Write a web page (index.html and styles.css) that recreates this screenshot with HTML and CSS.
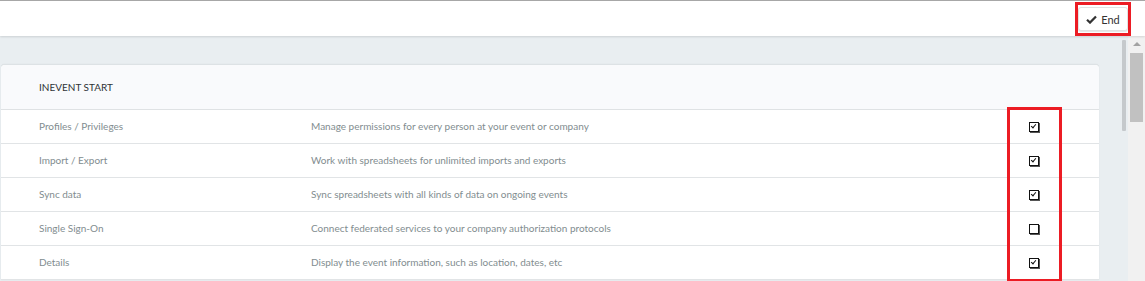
FILE: index.html
```html
<!doctype html>
<html>
    <head>
        <title>Tools</title>
        <meta charset="utf-8">
        <link rel="stylesheet" href="styles.css">
    </head>

    <body>
        <header class="topbar">
            <div class="mark end-mark">
                <button class="end-btn">
                    <svg class="end-icon" width="11" height="9" viewBox="0 0 11 9">
                        <path d="M1 4.8 L4 7.6 L10 1.4" fill="none" stroke="#333" stroke-width="2.2"/>
                    </svg>
                    End
                </button>
            </div>
        </header>

        <section class="main">
            <div class="content">
                <div class="card">
                    <div class="card-head">INEVENT START</div>

                    <div class="row">
                        <div class="cell name">Profiles / Privileges</div>
                        <div class="cell desc">Manage permissions for every person at your event or company</div>
                        <div class="cell check"><span class="box on"></span></div>
                    </div>

                    <div class="row">
                        <div class="cell name">Import / Export</div>
                        <div class="cell desc">Work with spreadsheets for unlimited imports and exports</div>
                        <div class="cell check"><span class="box on"></span></div>
                    </div>

                    <div class="row">
                        <div class="cell name">Sync data</div>
                        <div class="cell desc">Sync spreadsheets with all kinds of data on ongoing events</div>
                        <div class="cell check"><span class="box on"></span></div>
                    </div>

                    <div class="row">
                        <div class="cell name">Single Sign-On</div>
                        <div class="cell desc">Connect federated services to your company authorization protocols</div>
                        <div class="cell check"><span class="box"></span></div>
                    </div>

                    <div class="row">
                        <div class="cell name">Details</div>
                        <div class="cell desc">Display the event information, such as location, dates, etc</div>
                        <div class="cell check"><span class="box on"></span></div>
                    </div>

                    <div class="mark col-mark"></div>
                </div>
                <div class="inner-bar"></div>
            </div>

            <div class="scrollbar">
                <div class="arrow"></div>
                <div class="thumb"></div>
            </div>
        </section>
    </body>
</html>
```

FILE: styles.css
```css
body{
    margin: 0px;
    padding: 0px;
    font-family: Lato, "Open Sans", sans-serif;
    background: #e9eef1;
    overflow: hidden;
}

.topbar{
    display: flex;
    justify-content: flex-end;
    align-items: flex-start;
    height: 35px;
    background: #ffffff;
    border-top: 1px solid #a7a7a7;
    box-shadow: 0 1px 2px rgba(0, 0, 0, 0.12);
    position: relative;
    z-index: 2;
}

.mark{
    border: 3px solid #ec1c24;
    box-sizing: border-box;
}

.end-mark{
    margin: 1px 14px 0 0;
    width: 56px;
    height: 34px;
    padding: 2px 0;
    background: #ffffff;
}

.end-btn{
    display: flex;
    align-items: center;
    justify-content: center;
    gap: 4px;
    width: 50px;
    height: 24px;
    padding: 0;
    border: 1px solid #e2e2e2;
    border-radius: 3px;
    background: #ffffff;
    box-shadow: 0 1px 1px rgba(0, 0, 0, 0.1);
    font-family: Lato, sans-serif;
    font-size: 11px;
    color: #333333;
}

.main{
    display: flex;
    height: 245px;
}

.content{
    flex: 1;
    display: flex;
    align-items: flex-start;
    padding-top: 4px;
}

.card{
    position: relative;
    flex: 1;
    margin-top: 24px;
    margin-left: 1px;
    background: #ffffff;
    border-top: 1px solid #dde2e5;
    border-radius: 4px 4px 0 0;
    box-shadow: 0 0 1px rgba(0, 0, 0, 0.12);
}

.card-head{
    height: 44px;
    line-height: 44px;
    padding-left: 38px;
    background: #f9fafc;
    border-bottom: 1px solid #dfe2e4;
    border-radius: 4px 4px 0 0;
    font-size: 10px;
    color: #2f3336;
}

.row{
    display: grid;
    grid-template-columns: 310px 1fr 54px 37px;
    height: 33px;
    border-bottom: 1px solid #e1e4e6;
    align-items: center;
}

.cell{
    font-size: 10px;
    color: #828d8f;
    padding-bottom: 1px;
}

.name{
    padding-left: 38px;
}

.check{
    grid-column: 3;
    display: flex;
    justify-content: center;
    padding: 0 2px 0 0;
}

.box{
    display: block;
    width: 8px;
    height: 8px;
    border: 1px solid #111111;
    box-shadow: 1px 1px 0 #555555;
    position: relative;
}

.box.on::after{
    content: "";
    position: absolute;
    left: 2px;
    top: 0px;
    width: 2px;
    height: 4px;
    border: solid #111111;
    border-width: 0 1.5px 1.5px 0;
    transform: rotate(40deg);
}

.col-mark{
    position: absolute;
    top: 42px;
    left: 1006px;
    width: 55px;
    height: 175px;
}

.inner-bar{
    width: 4px;
    height: 91px;
    margin: 0 2px 0 23px;
    background: #c5c9cc;
    border-radius: 1px;
}

.scrollbar{
    width: 17px;
    background: #f1f1f1;
    display: flex;
    flex-direction: column;
    align-items: center;
}

.arrow{
    margin-top: 6px;
    width: 0;
    height: 0;
    border-left: 4px solid transparent;
    border-right: 4px solid transparent;
    border-bottom: 4px solid #a3a3a3;
}

.thumb{
    margin-top: 7px;
    width: 13px;
    height: 69px;
    background: #c1c1c1;
}
```
